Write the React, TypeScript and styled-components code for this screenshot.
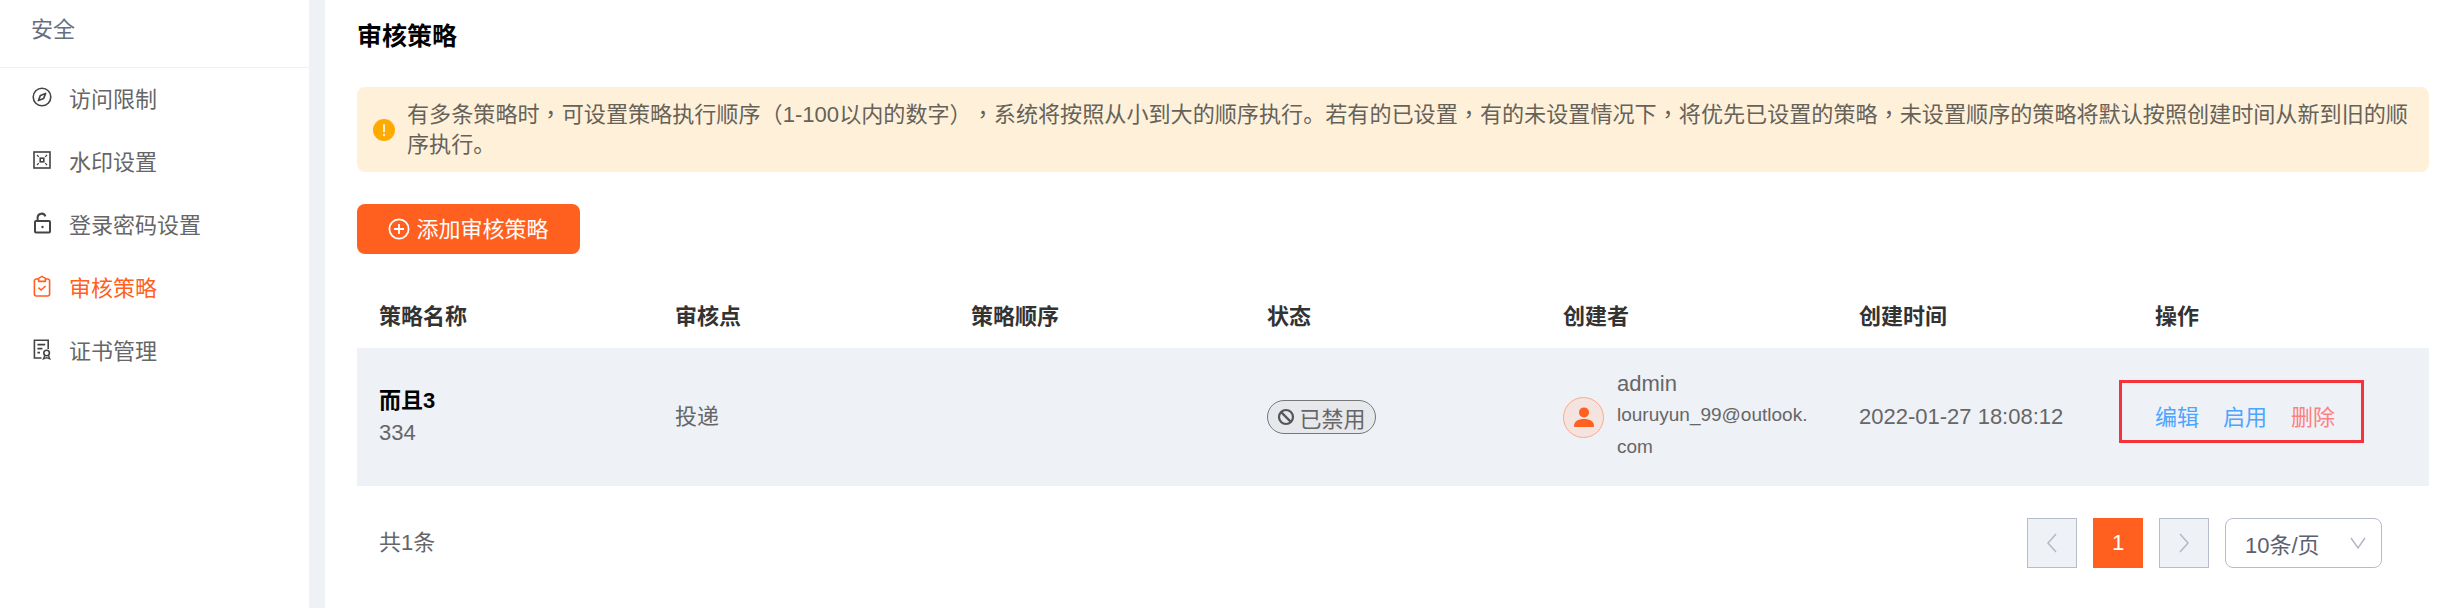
import { FunctionComponent, ReactNode } from 'react'
import styled, { createGlobalStyle } from 'styled-components'

const FONT = `"Liberation Sans", "Noto Sans CJK SC", sans-serif`
const ORANGE = '#ff5f1f'

const GlobalStyle = createGlobalStyle`
  html, body {
    margin: 0;
    padding: 0;
    height: 100%;
    background: #fff;
  }
  #root {
    height: 100%;
  }
`

const Page = styled.div`
  display: flex;
  width: 2452px;
  height: 608px;
  overflow: hidden;
  background: #eef1f6;
  font-family: ${FONT};
  font-size: 22px;
  color: #666;
  text-spacing-trim: space-all;
`

const Sidebar = styled.aside`
  flex: 0 0 309px;
  background: #fff;
`

const SidebarTitle = styled.div`
  box-sizing: border-box;
  height: 68px;
  line-height: 60px;
  padding-left: 31px;
  border-bottom: 1px solid #eef0f4;
  color: #666e80;
`

const Menu = styled.ul`
  list-style: none;
  margin: 0;
  padding: 0;
`

const MenuItem = styled.li<{ $active?: boolean }>`
  display: flex;
  align-items: center;
  gap: 17px;
  height: 63px;
  padding: 0 0 6px 32px;
  box-sizing: border-box;
  color: ${p => (p.$active ? ORANGE : '#666')};
  svg {
    flex: none;
    width: 20px;
    color: ${p => (p.$active ? ORANGE : '#444')};
  }
`

const Main = styled.main`
  flex: 1;
  margin-left: 16px;
  padding: 0 23px 0 32px;
  background: #fff;
`

const Title = styled.h2`
  margin: 0;
  height: 70px;
  line-height: 72px;
  font-size: 25px;
  font-weight: bold;
  color: #000;
`

const Alert = styled.div`
  display: flex;
  align-items: center;
  gap: 12px;
  box-sizing: border-box;
  height: 85px;
  margin-top: 17px;
  padding: 0 16px 2px;
  border-radius: 8px;
  background: #fff1d9;
  font-size: 22.1px;
  line-height: 30px;
  color: #66625a;
  svg {
    flex: none;
    margin-top: 2px;
  }
`

// this face keeps the commas in the middle of their cell, as the reference does
const Comma = styled.span`
  font-family: "Noto Sans CJK TC", sans-serif;
`

const AddButton = styled.button`
  display: flex;
  align-items: center;
  justify-content: center;
  gap: 6px;
  width: 223px;
  height: 50px;
  margin-top: 32px;
  padding: 0 0 5px;
  border: 0;
  border-radius: 8px;
  background: ${ORANGE};
  color: #fff;
  font: inherit;
  svg {
    margin-top: 5px;
  }
`

const Row = styled.div<{ $head?: boolean }>`
  display: grid;
  grid-template-columns: repeat(7, 1fr);
  align-items: center;
  box-sizing: border-box;
  height: ${p => (p.$head ? '64px' : '138px')};
  margin-top: ${p => (p.$head ? '30px' : '0')};
  padding-bottom: ${p => (p.$head ? '5px' : '0')};
  background: ${p => (p.$head ? '#fff' : '#eef1f6')};
  font-weight: ${p => (p.$head ? 'bold' : 'normal')};
  color: ${p => (p.$head ? '#333' : '#666')};
`

const Cell = styled.div<{ $raised?: boolean }>`
  padding-left: 22px;
  padding-bottom: ${p => (p.$raised ? '6px' : '0')};
`

const PolicyName = styled.div`
  font-weight: bold;
  color: #000;
  line-height: 32px;
`

const PolicyDesc = styled.div`
  line-height: 32px;
`

const StatusBadge = styled.span`
  display: inline-flex;
  align-items: center;
  justify-content: center;
  gap: 4px;
  box-sizing: border-box;
  width: 109px;
  height: 34px;
  border: 1px solid #777;
  border-radius: 17px;
  background: #e6e8ec;
  color: #666;
  vertical-align: middle;
`

const Creator = styled.div`
  display: flex;
  align-items: center;
  gap: 13px;
`

const Avatar = styled.div`
  flex: none;
  display: flex;
  align-items: center;
  justify-content: center;
  box-sizing: border-box;
  width: 41px;
  height: 41px;
  border: 1px solid #f9ab8d;
  border-radius: 50%;
  background: #f5e3e0;
`

const CreatorInfo = styled.div`
  width: 195px;
  margin-top: -3px;
`

const CreatorName = styled.div`
  line-height: 30px;
`

const CreatorMail = styled.div`
  font-size: 19px;
  line-height: 32px;
  word-break: break-all;
`

const ActionCell = styled(Cell)`
  position: relative;
  display: flex;
  gap: 24px;
  padding-bottom: 4px;
`

const ActionLink = styled.a<{ $danger?: boolean }>`
  color: ${p => (p.$danger ? '#ff7f7f' : '#4ea5ff')};
`

const Highlight = styled.div`
  position: absolute;
  left: -14px;
  top: -19px;
  box-sizing: border-box;
  width: 245px;
  height: 63px;
  border: 3px solid #f5333a;
`

const Footer = styled.div`
  display: flex;
  align-items: center;
  justify-content: space-between;
  margin-top: 32px;
  padding-left: 22px;
`

const Total = styled.span`
  padding-bottom: 6px;
`

const Pagination = styled.div`
  display: flex;
  gap: 16px;
  margin-right: 47px;
`

const PageButton = styled.div<{ $active?: boolean }>`
  display: flex;
  align-items: center;
  justify-content: center;
  box-sizing: border-box;
  width: 50px;
  height: 50px;
  border: 1px solid ${p => (p.$active ? ORANGE : '#b6bccc')};
  background: ${p => (p.$active ? ORANGE : '#eef1f6')};
  color: #fff;
`

const PageSize = styled.div`
  display: flex;
  align-items: center;
  justify-content: space-between;
  box-sizing: border-box;
  width: 157px;
  height: 50px;
  padding: 0 15px 0 19px;
  border: 1px solid #b6bccc;
  border-radius: 8px;
  color: #5c6070;
`

const IconCompass = () => (
  <svg width="20" height="20" viewBox="0 0 20 20" fill="none" stroke="currentColor" strokeWidth="1.6">
    <circle cx="10" cy="10" r="8.8" />
    <path d="M13.6 6.4 11.6 11.6 6.4 13.6 8.4 8.4Z" strokeLinejoin="round" />
  </svg>
)

const IconWatermark = () => (
  <svg width="20" height="20" viewBox="0 0 20 20" fill="none" stroke="currentColor" strokeWidth="1.6">
    <rect x="2" y="2" width="16" height="16" />
    <rect x="8.2" y="8.2" width="3.6" height="3.6" />
    <path d="M5 5 6.800 6.800M15 5 13.200 6.800M5 15 6.800 13.200M15 15 13.200 13.200" strokeWidth="1.2" />
  </svg>
)

const IconLock = () => (
  <svg width="20" height="22" viewBox="0 0 20 22" fill="none" stroke="currentColor" strokeWidth="2">
    <rect x="3" y="9" width="15" height="11.5" rx="1" />
    <path d="M5.6 9V5.600a4 4 0 0 1 7.800-1.200" />
    <circle cx="10.5" cy="15" r="1.2" fill="currentColor" stroke="none" />
  </svg>
)

const IconClipboard = () => (
  <svg width="20" height="22" viewBox="0 0 20 22" fill="none" stroke="currentColor" strokeWidth="1.6">
    <path d="M6.600 4H4.400A2 2 0 0 0 2.400 6v13a2 2 0 0 0 2 2h11.200a2 2 0 0 0 2-2V6a2 2 0 0 0-2-2h-2.200" />
    <path d="M6.600 6.400V3.400L10 1.400l3.400 2v3Z" strokeLinejoin="round" />
    <path d="M6.400 12.600 9 15l4.600-4" />
  </svg>
)

const IconCert = () => (
  <svg width="20" height="22" viewBox="0 0 20 22" fill="none" stroke="currentColor" strokeWidth="1.6">
    <path d="M9.500 20H2.400V2.200h13.800V11" />
    <path d="M5.400 6.600h7.800M5.400 10.600h5M5.400 14.600h2.600" />
    <circle cx="14.600" cy="15" r="2.800" />
    <path d="M12.800 17.400 11.400 20.800l3.200-1.200 3.200 1.200-1.400-3.400" strokeWidth="1.300" />
  </svg>
)

const IconWarning = () => (
  <svg width="22" height="22" viewBox="0 0 22 22">
    <circle cx="11" cy="11" r="11" fill="#ffaa00" />
    <rect x="10" y="5" width="2" height="8.400" rx="1" fill="#fff" opacity="0.85" />
    <circle cx="11" cy="16" r="1.200" fill="#fff" opacity="0.85" />
  </svg>
)

const IconPlus = () => (
  <svg width="22" height="22" viewBox="0 0 22 22" fill="none" stroke="#fff" strokeWidth="1.8">
    <circle cx="11" cy="11" r="9.600" />
    <path d="M11 6v10M6 11h10" />
  </svg>
)

const IconBan = () => (
  <svg width="18" height="18" viewBox="0 0 18 18" fill="none" stroke="#555" strokeWidth="2.200">
    <circle cx="9" cy="9" r="7" />
    <path d="M4.400 4.400 13.600 13.600" />
  </svg>
)

const IconUser = () => (
  <svg width="22" height="22" viewBox="0 0 22 22" fill={ORANGE}>
    <circle cx="11" cy="6.400" r="5" />
    <path d="M1 20c0-4.600 4-7 10-7s10 2.400 10 7c0 .6-.4 1-1 1H2c-.6 0-1-.4-1-1Z" />
  </svg>
)

const Chevron: FunctionComponent<{ points: string; w?: number; h?: number }> = ({ points, w = 14, h = 24 }) => (
  <svg width={w} height={h} viewBox={`0 0 ${w} ${h}`} fill="none" stroke="#b4b8c4" strokeWidth="1.5">
    <polyline points={points} />
  </svg>
)

const menuItems: { label: string; icon: ReactNode; active?: boolean }[] = [
  { label: '访问限制', icon: <IconCompass /> },
  { label: '水印设置', icon: <IconWatermark /> },
  { label: '登录密码设置', icon: <IconLock /> },
  { label: '审核策略', icon: <IconClipboard />, active: true },
  { label: '证书管理', icon: <IconCert /> }
]

const headers = ['策略名称', '审核点', '策略顺序', '状态', '创建者', '创建时间', '操作']

const App: FunctionComponent = () => (
  <Page>
    <GlobalStyle />
    <Sidebar>
      <SidebarTitle>安全</SidebarTitle>
      <Menu>
        {menuItems.map(item => (
          <MenuItem key={item.label} $active={item.active}>
            {item.icon}
            {item.label}
          </MenuItem>
        ))}
      </Menu>
    </Sidebar>
    <Main>
      <Title>审核策略</Title>
      <Alert>
        <IconWarning />
        <span>
          有多条策略时<Comma>，</Comma>可设置策略执行顺序（1-100以内的数字）<Comma>，</Comma>
          系统将按照从小到大的顺序执行。若有的已设置<Comma>，</Comma>有的未设置情况下<Comma>，</Comma>
          将优先已设置的策略<Comma>，</Comma>未设置顺序的策略将默认按照创建时间从新到旧的顺
          <br />
          序执行。
        </span>
      </Alert>
      <AddButton>
        <IconPlus />
        添加审核策略
      </AddButton>
      <Row $head>
        {headers.map(h => (
          <Cell key={h}>{h}</Cell>
        ))}
      </Row>
      <Row>
        <Cell>
          <PolicyName>而且3</PolicyName>
          <PolicyDesc>334</PolicyDesc>
        </Cell>
        <Cell $raised>投递</Cell>
        <Cell />
        <Cell>
          <StatusBadge>
            <IconBan />
            已禁用
          </StatusBadge>
        </Cell>
        <Cell>
          <Creator>
            <Avatar>
              <IconUser />
            </Avatar>
            <CreatorInfo>
              <CreatorName>admin</CreatorName>
              <CreatorMail>louruyun_99@outlook.com</CreatorMail>
            </CreatorInfo>
          </Creator>
        </Cell>
        <Cell>2022-01-27 18:08:12</Cell>
        <ActionCell>
          <ActionLink>编辑</ActionLink>
          <ActionLink>启用</ActionLink>
          <ActionLink $danger>删除</ActionLink>
          <Highlight />
        </ActionCell>
      </Row>
      <Footer>
        <Total>共1条</Total>
        <Pagination>
          <PageButton>
            <Chevron points="11,3 3,12 11,21" />
          </PageButton>
          <PageButton $active>1</PageButton>
          <PageButton>
            <Chevron points="3,3 11,12 3,21" />
          </PageButton>
          <PageSize>
            10条/页
            <Chevron points="1,4 8,14 15,4" w={16} h={18} />
          </PageSize>
        </Pagination>
      </Footer>
    </Main>
  </Page>
)

export default App
